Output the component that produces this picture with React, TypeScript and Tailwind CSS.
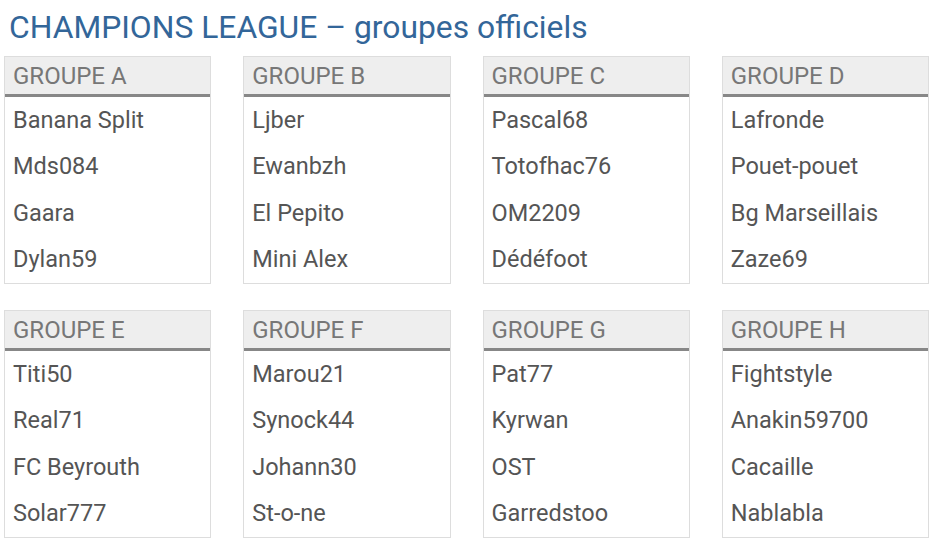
import React from 'react';

const groups: { name: string; players: string[] }[] = [
  { name: 'GROUPE A', players: ['Banana Split', 'Mds084', 'Gaara', 'Dylan59'] },
  { name: 'GROUPE B', players: ['Ljber', 'Ewanbzh', 'El Pepito', 'Mini Alex'] },
  { name: 'GROUPE C', players: ['Pascal68', 'Totofhac76', 'OM2209', 'Dédéfoot'] },
  { name: 'GROUPE D', players: ['Lafronde', 'Pouet-pouet', 'Bg Marseillais', 'Zaze69'] },
  { name: 'GROUPE E', players: ['Titi50', 'Real71', 'FC Beyrouth', 'Solar777'] },
  { name: 'GROUPE F', players: ['Marou21', 'Synock44', 'Johann30', 'St-o-ne'] },
  { name: 'GROUPE G', players: ['Pat77', 'Kyrwan', 'OST', 'Garredstoo'] },
  { name: 'GROUPE H', players: ['Fightstyle', 'Anakin59700', 'Cacaille', 'Nablabla'] },
];

const GroupCard = ({ name, players }: { name: string; players: string[] }) => (
  <div className="border border-[#dddddd] bg-white">
    <div className="flex h-[40px] items-center border-b-[3px] border-[#878787] bg-[#eeeeee] px-[8px] text-[24px] text-[#777777]">
      {name}
    </div>
    <ul>
      {players.map((player) => (
        <li key={player} className="flex h-[46.5px] items-center px-[8px] text-[23.5px] text-[#555555]">
          {player}
        </li>
      ))}
    </ul>
  </div>
);

export default function App() {
  return (
    <div className="h-[538px] w-[929px] overflow-hidden bg-white" style={{ fontFamily: 'Roboto, "Noto Sans", sans-serif' }}>
      <h1 className="px-[9px] pt-[7px] text-[31.8px] leading-[40px] text-[#336699]">
        CHAMPIONS LEAGUE – groupes officiels
      </h1>
      <div className="mt-[9px] grid grid-cols-4 gap-x-[32px] gap-y-[26px] pl-[4px]">
        {groups.map((group) => (
          <GroupCard key={group.name} name={group.name} players={group.players} />
        ))}
      </div>
    </div>
  );
}
